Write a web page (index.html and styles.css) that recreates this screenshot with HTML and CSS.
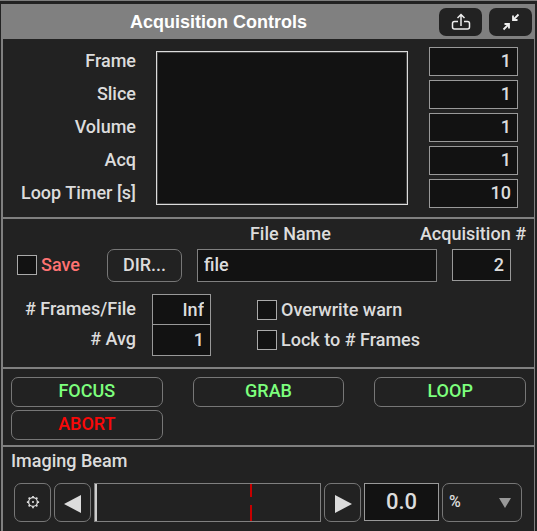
FILE: index.html
```html
<!DOCTYPE html>
<html lang="en">
<head>
<meta charset="utf-8">
<title>Acquisition Controls</title>
<link rel="stylesheet" href="styles.css">
</head>
<body>
<main class="panel">
  <header class="titlebar">
    <h1 class="title">Acquisition Controls</h1>
    <button class="tool" type="button" aria-label="Pop out">
      <svg width="20" height="18" viewBox="0 0 20 18" fill="none" stroke="currentColor" stroke-width="1.5"><path d="M7 8.500H3.500Q1.500 8.500 1.500 10.500v3.500q0 2 2 2h13q2 0 2-2v-3.500q0-2-2-2H13"/><path d="M10 13V2M6.500 5 10 1.500 13.500 5"/></svg>
    </button>
    <button class="tool" type="button" aria-label="Collapse">
      <svg width="18" height="18" viewBox="0 0 18 18" fill="none" stroke="currentColor" stroke-width="1.800"><path d="M16.500 1.500 12 6M11 2.500V7h4.500M1.500 16.500 6 12M2.500 11H7v4.500"/><path d="M11 4V7h3zM4 11H7v3z" fill="currentColor" stroke="none"/></svg>
    </button>
  </header>

  <section class="section counters">
    <div class="labels">
      <label for="frame">Frame</label>
      <label for="slice">Slice</label>
      <label for="volume">Volume</label>
      <label for="acq">Acq</label>
      <label for="timer">Loop Timer [s]</label>
    </div>
    <div class="display"></div>
    <div class="values">
      <input id="frame" class="field number" value="1">
      <input id="slice" class="field number" value="1">
      <input id="volume" class="field number" value="1">
      <input id="acq" class="field number" value="1">
      <input id="timer" class="field number" value="10">
    </div>
  </section>

  <section class="section saving">
    <div class="captions">
      <label class="name-caption" for="name">File Name</label>
      <label for="number">Acquisition #</label>
    </div>
    <div class="file-row">
      <label class="check save"><input type="checkbox">Save</label>
      <button class="btn dir" type="button">DIR...</button>
      <input id="name" class="field name" value="file">
      <input id="number" class="field number acq-number" value="2">
    </div>
    <div class="options">
      <div class="option-labels">
        <label for="per-file"># Frames/File</label>
        <label for="avg"># Avg</label>
      </div>
      <div class="stack">
        <input id="per-file" class="field number" value="Inf">
        <input id="avg" class="field number" value="1">
      </div>
      <div class="checks">
        <label class="check"><input type="checkbox">Overwrite warn</label>
        <label class="check"><input type="checkbox">Lock to # Frames</label>
      </div>
    </div>
  </section>

  <section class="section actions">
    <button class="btn go" type="button">FOCUS</button>
    <button class="btn go" type="button">GRAB</button>
    <button class="btn go" type="button">LOOP</button>
    <button class="btn stop" type="button">ABORT</button>
  </section>

  <section class="beam">
    <h2 class="beam-title">Imaging Beam</h2>
    <div class="beam-row">
      <button class="btn square" type="button" aria-label="Beam settings">
        <svg class="gear" width="14" height="14" viewBox="0 0 16 16" fill="none" stroke="currentColor" stroke-width="1.500"><circle cx="8" cy="8" r="5"/><circle cx="8" cy="8" r="1.200" fill="currentColor" stroke="none"/><path stroke-width="2" d="M8 1v2M8 13v2M1 8h2M13 8h2M3 3l1.500 1.500M11.500 11.500 13 13M3 13l1.500-1.500M11.500 4.500 13 3"/></svg>
      </button>
      <button class="btn square" type="button" aria-label="Decrease power">
        <svg class="arrow" width="18" height="18" viewBox="0 0 18 18"><path d="M0 9 17 0v18z" fill="currentColor"/></svg>
      </button>
      <div class="slider">
        <input class="range" type="range" min="0" max="100" value="0" aria-label="Beam power">
        <span class="limit"></span>
      </div>
      <button class="btn square" type="button" aria-label="Increase power">
        <svg class="arrow" width="18" height="18" viewBox="0 0 18 18"><path d="M18 9 1 0v18z" fill="currentColor"/></svg>
      </button>
      <input class="field power" value="0.0" aria-label="Power value">
      <div class="unit">
        <select aria-label="Power unit"><option>%</option></select>
        <svg class="caret" width="12" height="10" viewBox="0 0 12 10"><path d="M0 0h12L6 10z" fill="currentColor"/></svg>
      </div>
    </div>
  </section>
</main>
</body>
</html>
```
FILE: styles.css
```css
* {
  box-sizing: border-box;
}

body {
  margin: 0;
  min-height: 100vh;
  display: flex;
  background: #222;
  border-top: 1px solid #7d7d7d;
  color: #dcdcdc;
  font: 500 18px/24px Roboto, "Liberation Sans", sans-serif;
}

button,
input,
select {
  font: inherit;
  color: inherit;
  margin: 0;
}

.panel {
  flex: 1;
  min-width: 0;
  margin: 3px 2px 0 1px;
  border-left: 2px solid #808080;
  border-right: 1px solid #808080;
}

.titlebar {
  display: flex;
  align-items: center;
  gap: 7px;
  height: 35px;
  padding-right: 2px;
  background: #808080;
}

.title {
  flex: 1;
  margin: 0;
  padding-left: 2px;
  text-align: center;
  color: #fff;
  font: bold 18px/24px "Liberation Sans", Arial, sans-serif;
}

.tool {
  display: flex;
  align-items: center;
  justify-content: center;
  width: 43px;
  height: 28px;
  padding: 0;
  border: 0;
  border-radius: 7px;
  background: #222;
  color: #eee;
}

.section {
  border-bottom: 2px solid #808080;
}

.field {
  display: block;
  width: 100%;
  min-width: 0;
  padding: 0 6px 2px;
  border: 1px solid #999;
  border-radius: 0;
  background: #121212;
}

.number {
  text-align: right;
}

.btn {
  display: flex;
  align-items: center;
  justify-content: center;
  padding: 0 0 2px;
  border: 1px solid #777;
  border-radius: 7px;
  background: #222;
}

.counters {
  display: grid;
  grid-template-columns: 133px 1fr 89px;
  padding: 8px 16px 9px 0;
}

.labels,
.values {
  display: grid;
  grid-auto-rows: 29px;
  gap: 4px;
}

.labels {
  text-align: right;
  line-height: 28px;
}

.display {
  margin: 4px 21px 3px 20px;
  border: 1px solid #dcdcdc;
  outline: 1px solid #444;
  outline-offset: -2px;
  background: #121212;
}

.saving {
  padding-bottom: 11px;
}

.captions {
  display: flex;
  padding: 3px 8px 3px 158px;
}

.name-caption {
  flex: 1;
  text-align: center;
}

.file-row {
  display: grid;
  grid-template-columns: 75px 75px 1fr 59px;
  column-gap: 15px;
  height: 33px;
  padding: 0 23px 0 14px;
}

.name {
  border-color: #808080;
}

.acq-number {
  height: 32px;
}

.check {
  display: flex;
  align-items: center;
  gap: 4px;
}

.check input {
  appearance: none;
  width: 20px;
  height: 20px;
  border: 1px solid #aaa;
  background: #121212;
}

.check input:checked {
  background: #dcdcdc;
}

.save {
  height: 32px;
  color: #ff7272;
}

.options {
  display: flex;
  margin-top: 12px;
}

.option-labels {
  width: 133px;
  margin-right: 16px;
  text-align: right;
  line-height: 30px;
}

.option-labels label {
  display: block;
}

.stack {
  width: 59px;
  margin-right: 46px;
}

.stack .field {
  height: 32px;
}

.stack .field + .field {
  margin-top: -2px;
}

.checks .check {
  height: 30px;
}

.checks {
  padding-top: 1px;
}

.actions {
  display: grid;
  grid-template-columns: repeat(3, 1fr);
  grid-auto-rows: 30px;
  gap: 3px 30px;
  padding: 8px 8px 5px;
}

.go {
  color: #7dff7d;
}

.stop {
  color: #f90808;
}

.beam-title {
  margin: 0;
  padding: 2px 8px 10px;
  font: inherit;
}

.beam-row {
  display: flex;
  gap: 3px;
  height: 39px;
  padding: 0 12px 0 11px;
}

.square {
  width: 37px;
  padding: 0;
}

.gear {
  margin-bottom: 2px;
}

.arrow {
  margin-top: 3px;
}

.slider {
  position: relative;
  flex: 1;
  min-width: 0;
  border: 1px solid #808080;
}

.range {
  appearance: none;
  display: block;
  width: 100%;
  height: 100%;
  background: #222;
}

.range::-webkit-slider-thumb {
  appearance: none;
  width: 2px;
  height: 37px;
  background: #ccc;
}

.limit {
  position: absolute;
  top: 0;
  bottom: 0;
  left: 69%;
  width: 2px;
  background: linear-gradient(#c80000 13px, transparent 13px 21px, #c80000 21px);
}

.power {
  width: 75px;
  height: 38px;
  font-size: 22px;
  text-align: center;
}

.unit {
  position: relative;
  width: 80px;
}

.unit select {
  appearance: none;
  width: 100%;
  height: 100%;
  padding: 0 6px 2px;
  border: 1px solid #777;
  border-radius: 7px;
  background: #222;
  font-size: 16px;
}

.caret {
  position: absolute;
  right: 11px;
  top: 15px;
  color: #999;
  pointer-events: none;
}
```
